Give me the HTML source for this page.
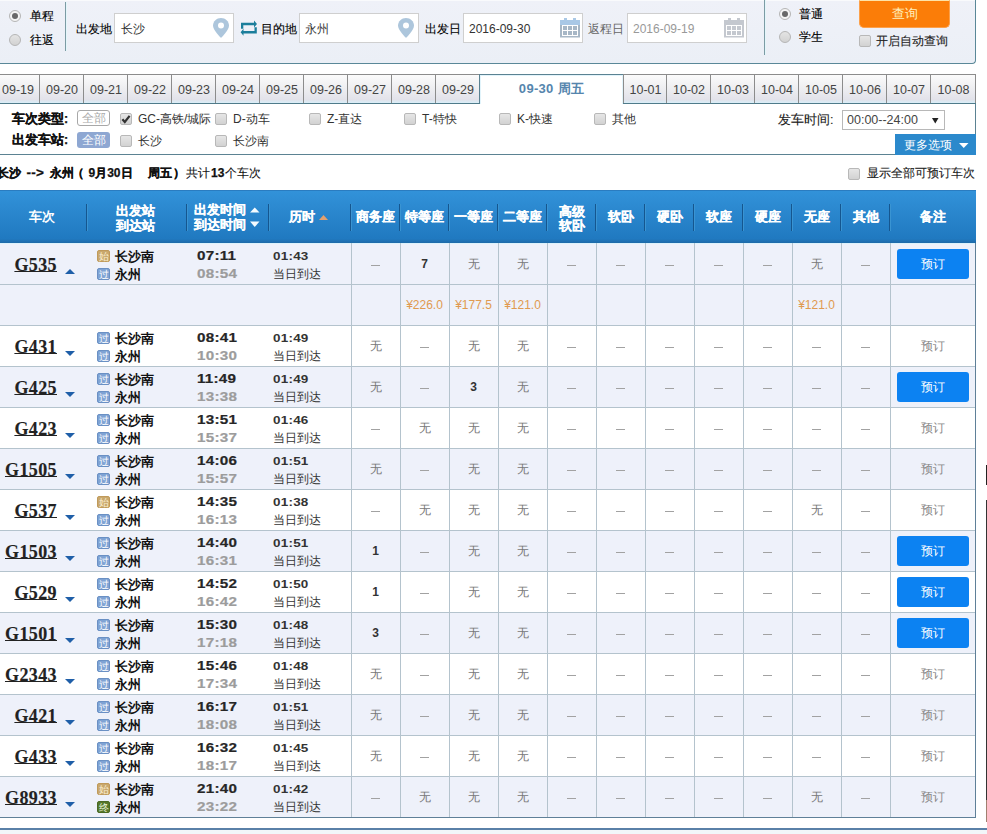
<!DOCTYPE html><html><head><meta charset="utf-8"><style>
*{margin:0;padding:0;box-sizing:border-box}
html,body{width:987px;height:834px;overflow:hidden;background:#fff;font-family:"Liberation Sans",sans-serif;font-size:12px;color:#333}
.a{position:absolute}
.t{position:absolute;white-space:nowrap;line-height:1}
.k{-webkit-text-stroke:0.12px currentColor}
.radio{position:absolute;width:12px;height:12px;border-radius:50%;border:1px solid #b5b5b5;background:linear-gradient(#e4e4e4,#d2d2d2)}
.radio.on{background:#f4f4f4}
.radio.on::after{content:"";position:absolute;left:2px;top:2px;width:6px;height:6px;border-radius:50%;background:#686868}
.inp{position:absolute;top:13px;height:30px;background:#fff;border:1px solid #cfcfcf}
.chk{position:absolute;width:12px;height:12px;border:1px solid #b8b8b8;border-radius:2px;background:linear-gradient(#e6e6e6,#d2d2d2)}
.tab{position:absolute;top:74px;height:29px;width:45px;border:1px solid #8c8c8c;border-right:none;border-bottom:none;background:linear-gradient(#fbfbfb 0%,#f0f0f2 40%,#e2e2ea 88%,#d9eef8 100%);text-align:center;line-height:31px;font-size:12.5px;color:#444}
.hd{position:absolute;color:#fff;font-weight:bold;font-size:12.5px;line-height:1;white-space:nowrap;text-align:center;-webkit-text-stroke:0.25px #fff}
.sep{position:absolute;top:204px;width:1px;height:27px;background:#15568f;box-shadow:1px 0 0 #3a94d2}
.row{position:absolute;left:0;width:976px;height:42px;border-top:1px solid #b4c3cd}
.vl{position:absolute;width:1px;background:#b4c3cd}
.num{position:absolute;left:0;width:57px;text-align:right;font-family:"Liberation Serif",serif;font-weight:bold;font-size:18px;text-decoration:underline;text-underline-offset:0px;color:#222;line-height:1;-webkit-text-stroke:0.15px #222;letter-spacing:0.4px}
.ic{position:absolute;left:97px;width:13px;height:12px;border-radius:2px;font-size:10px;line-height:12px;text-align:center;color:#fff}
.ic.g{background:#7fa3d4;border:1px solid #6a90c4}
.ic.s{background:#c9a86e;border:1px solid #c09a5a;color:#fbf0d4}
.ic.e{background:#55762c;border:1px solid #4a6a22;color:#eaf4d8}
.stn{position:absolute;left:115px;font-weight:bold;font-size:13px;color:#111;line-height:1;white-space:nowrap}
.tm{position:absolute;left:197px;font-weight:bold;font-size:13px;letter-spacing:0.2px;line-height:1;transform:scaleX(1.17);transform-origin:0 0;-webkit-text-stroke:0.2px currentColor}
.du{position:absolute;left:273px;font-weight:bold;font-size:11.5px;letter-spacing:0.2px;line-height:1;color:#333;transform:scaleX(1.17);transform-origin:0 0}
.dd{position:absolute;left:273px;font-size:12px;line-height:1;color:#333}
.cell{position:absolute;text-align:center;line-height:1;font-size:12px;color:#777}
.cell.b{font-weight:bold;color:#333}
.btn{position:absolute;left:897px;width:72px;height:30px;border-radius:3px;background:#0c82f2;color:#fff;text-align:center;line-height:30px;font-size:12px}
.btng{position:absolute;left:897px;width:72px;text-align:center;line-height:1;font-size:12px;color:#888}
.dash{position:absolute;width:9px;height:1px;background:#a2a2a2}
.pr{position:absolute;text-align:center;line-height:1;font-size:12px;color:#e09a50}
</style></head><body>
<div class="a" style="left:-2px;top:0;width:978px;height:64px;background:linear-gradient(#eff1f8,#ebeff6);border:1px solid #5a8898;border-top:none;border-left:none;border-bottom-right-radius:4px"></div>
<div class="radio on" style="left:9px;top:10px"></div><div class="t k" style="left:30px;top:10px;font-size:12px;color:#000">单程</div>
<div class="radio" style="left:9px;top:34px"></div><div class="t k" style="left:30px;top:34px;font-size:12px;color:#000">往返</div>
<div class="a" style="left:0;top:0;width:975px;height:1px;background:#f9fafc"></div><div class="a" style="left:65px;top:2px;width:1px;height:49px;background:#7c9ba4;box-shadow:1px 0 0 #e4f6fa"></div>
<div class="t k" style="left:76px;top:23px;font-size:12px;color:#000">出发地</div>
<div class="inp" style="left:114px;width:120px"></div><div class="t" style="left:121px;top:23px;font-size:12px;color:#333">长沙</div>
<svg class="a" style="left:213px;top:18px" width="16" height="20" viewBox="0 0 16 20"><path d="M8 0C3.6 0 0 3.4 0 7.6 0 12.6 8 20 8 20s8-7.4 8-12.4C16 3.4 12.4 0 8 0z" fill="#adc6dc"/><circle cx="8" cy="7.4" r="3" fill="#fff"/></svg>
<svg class="a" style="left:236px;top:16px" width="26" height="24" viewBox="0 0 26 24"><path d="M5 6.8H18V4.6L21 8 18 11.4V9.2H7.3V12.7H5Z" fill="#1b7e9b"/><path d="M20.8 17.5H7.5V19.8L4.6 16.3 7.5 12.8V15.1H18.5V11.2H20.8Z" fill="#1b7e9b"/></svg>
<div class="t k" style="left:261px;top:23px;font-size:12px;color:#000">目的地</div>
<div class="inp" style="left:299px;width:120px"></div><div class="t" style="left:305px;top:23px;font-size:12px;color:#333">永州</div>
<svg class="a" style="left:398px;top:18px" width="16" height="20" viewBox="0 0 16 20"><path d="M8 0C3.6 0 0 3.4 0 7.6 0 12.6 8 20 8 20s8-7.4 8-12.4C16 3.4 12.4 0 8 0z" fill="#adc6dc"/><circle cx="8" cy="7.4" r="3" fill="#fff"/></svg>
<div class="t k" style="left:425px;top:23px;font-size:12px;color:#000">出发日</div>
<div class="inp" style="left:463px;width:120px"></div><div class="t" style="left:469px;top:23px;font-size:12px;color:#333">2016-09-30</div>
<svg class="a" style="left:560px;top:18px" width="20" height="20" viewBox="0 0 20 20"><rect x="4" y="0" width="3" height="3" fill="#a9c8e6"/><rect x="13" y="0" width="3" height="3" fill="#a9c8e6"/><rect x="0" y="2" width="20" height="5" fill="#a9c8e6"/><rect x="0" y="7" width="20" height="12.5" fill="#a7b7c6"/><rect x="2" y="7" width="16" height="11" fill="#fff"/><g fill="#a7b7c6"><rect x="3" y="8" width="4" height="4"/><rect x="8" y="8" width="4" height="4"/><rect x="13" y="8" width="4" height="4"/><rect x="3" y="13" width="4" height="4"/><rect x="8" y="13" width="4" height="4"/><rect x="13" y="13" width="4" height="4"/></g></svg>
<div class="t" style="left:588px;top:23px;font-size:12px;color:#666">返程日</div>
<div class="inp" style="left:627px;width:120px"></div><div class="t" style="left:633px;top:23px;font-size:12px;color:#999">2016-09-19</div>
<svg class="a" style="left:724px;top:18px" width="20" height="20" viewBox="0 0 20 20"><rect x="4" y="0" width="3" height="3" fill="#c4c8cf"/><rect x="13" y="0" width="3" height="3" fill="#c4c8cf"/><rect x="0" y="2" width="20" height="5" fill="#c4c8cf"/><rect x="0" y="7" width="20" height="12.5" fill="#c4c8cf"/><rect x="2" y="7" width="16" height="11" fill="#fff"/><g fill="#c4c8cf"><rect x="3" y="8" width="4" height="4"/><rect x="8" y="8" width="4" height="4"/><rect x="13" y="8" width="4" height="4"/><rect x="3" y="13" width="4" height="4"/><rect x="8" y="13" width="4" height="4"/><rect x="13" y="13" width="4" height="4"/></g></svg>
<div class="a" style="left:764px;top:0;width:1px;height:55px;background:#7c9ba4;box-shadow:1px 0 0 #e4f6fa"></div>
<div class="radio on" style="left:779px;top:8px"></div><div class="t k" style="left:799px;top:8px;font-size:12px;color:#000">普通</div>
<div class="radio" style="left:779px;top:31px"></div><div class="t k" style="left:799px;top:31px;font-size:12px;color:#000">学生</div>
<div class="a" style="left:859px;top:0;width:91px;height:28px;background:#fb7d08;border:1px solid #fca04a;border-top:1px solid #fde3a8;border-radius:0 0 5px 5px;color:#ffeebb;text-align:center;line-height:26px;font-size:12.5px">查询</div>
<div class="chk" style="left:859px;top:35px"></div><div class="t k" style="left:876px;top:35px;font-size:12px;color:#222">开启自动查询</div>
<div class="a" style="left:0;top:103px;width:976px;height:52px;border-bottom:1px solid #5b8292;border-right:1px solid #5b8292"></div>
<div class="a" style="left:0;top:103px;width:976px;height:1px;background:#4f7b8a"></div>
<div class="tab" style="left:-5px">09-19</div>
<div class="tab" style="left:39px">09-20</div>
<div class="tab" style="left:83px">09-21</div>
<div class="tab" style="left:127px">09-22</div>
<div class="tab" style="left:171px">09-23</div>
<div class="tab" style="left:215px">09-24</div>
<div class="tab" style="left:259px">09-25</div>
<div class="tab" style="left:303px">09-26</div>
<div class="tab" style="left:347px">09-27</div>
<div class="tab" style="left:391px">09-28</div>
<div class="tab" style="left:435px">09-29</div>
<div class="a" style="left:479px;top:74px;width:145px;height:30px;background:#fff;border:1px solid #5b8292;border-bottom:none;text-align:center;line-height:28px;font-weight:bold;font-size:13px;color:#5585ad;letter-spacing:0.3px;box-shadow:inset 1px 1px 0 #e2f4fb,inset -1px 0 0 #e2f4fb">09-30 周五</div>
<div class="tab" style="left:623px;width:44px">10-01</div>
<div class="tab" style="left:666px;width:45px">10-02</div>
<div class="tab" style="left:710px;width:45px">10-03</div>
<div class="tab" style="left:754px;width:45px">10-04</div>
<div class="tab" style="left:798px;width:45px">10-05</div>
<div class="tab" style="left:842px;width:45px">10-06</div>
<div class="tab" style="left:886px;width:45px">10-07</div>
<div class="tab" style="left:930px;width:46px">10-08</div>
<div class="a" style="left:975px;top:74px;width:1px;height:29px;background:#8c8c8c"></div><div class="a" style="left:0;top:103px;width:480px;height:1px;background:#4f7b8a"></div><div class="a" style="left:623px;top:103px;width:353px;height:1px;background:#4f7b8a"></div>
<div class="t" style="left:12px;top:113px;font-weight:bold;font-size:12.5px;color:#111;-webkit-text-stroke:0.25px #111">车次类型:</div>
<div class="a" style="left:77px;top:110px;width:33px;height:16px;border:1px solid #a8a8a8;border-radius:3px;background:#fff;color:#aaa;font-size:12px;line-height:14px;text-align:center">全部</div>
<div class="t" style="left:12px;top:134px;font-weight:bold;font-size:12.5px;color:#111;-webkit-text-stroke:0.25px #111">出发车站:</div>
<div class="a" style="left:77px;top:132px;width:33px;height:16px;border-radius:3px;background:#8ea7d2;color:#fff;font-size:12px;line-height:16px;text-align:center">全部</div>
<div class="chk" style="left:120px;top:113px"></div><div class="t" style="left:138px;top:113px;font-size:12px;color:#333">GC-高铁/城际</div>
<div class="chk" style="left:215px;top:113px"></div><div class="t" style="left:233px;top:113px;font-size:12px;color:#333">D-动车</div>
<div class="chk" style="left:309px;top:113px"></div><div class="t" style="left:327px;top:113px;font-size:12px;color:#333">Z-直达</div>
<div class="chk" style="left:404px;top:113px"></div><div class="t" style="left:422px;top:113px;font-size:12px;color:#333">T-特快</div>
<div class="chk" style="left:499px;top:113px"></div><div class="t" style="left:517px;top:113px;font-size:12px;color:#333">K-快速</div>
<div class="chk" style="left:594px;top:113px"></div><div class="t" style="left:612px;top:113px;font-size:12px;color:#333">其他</div>
<svg class="a" style="left:120px;top:113px" width="12" height="12" viewBox="0 0 12 12"><path d="M2.4 6.2l2.4 2.8L9.6 2.8" stroke="#333" stroke-width="2.2" fill="none"/></svg>
<div class="chk" style="left:120px;top:135px"></div><div class="t" style="left:138px;top:135px;font-size:12px;color:#333">长沙</div>
<div class="chk" style="left:215px;top:135px"></div><div class="t" style="left:233px;top:135px;font-size:12px;color:#333">长沙南</div>
<div class="t k" style="left:778px;top:114px;font-size:12.5px;color:#222">发车时间:</div>
<div class="a" style="left:842px;top:110px;width:103px;height:20px;border:1px solid #b8b8b8;background:#fff"></div><div class="t" style="left:847px;top:114px;font-size:12.5px;color:#444">00:00--24:00</div><svg class="a" style="left:932px;top:117.5px" width="7" height="6" viewBox="0 0 7 6"><path d="M0 0h6.5L3.25 5.5z" fill="#222"/></svg>
<div class="a" style="left:895px;top:134px;width:81px;height:21px;background:#2b89cc"></div><div class="t" style="left:904px;top:138.5px;font-size:12px;color:#fff">更多选项</div><svg class="a" style="left:958.5px;top:142.5px" width="10" height="6" viewBox="0 0 10 6"><path d="M0 0h9.5L4.75 5z" fill="#fff"/></svg>
<div class="t" style="left:-3px;top:167px;font-size:12px;font-weight:bold;color:#111;-webkit-text-stroke:0.25px #111">长沙</div>
<div class="t" style="left:26.5px;top:166px;font-size:13.5px;letter-spacing:0.3px;font-weight:bold;color:#111;-webkit-text-stroke:0.25px #111">--&gt;</div>
<div class="t" style="left:49.5px;top:167px;font-size:12px;font-weight:bold;color:#111;-webkit-text-stroke:0.25px #111">永州</div>
<div class="t" style="left:71.5px;top:167px;font-size:12px;font-weight:bold;color:#111;-webkit-text-stroke:0.25px #111">（</div>
<div class="t" style="left:88.5px;top:167px;font-size:12px;font-weight:bold;color:#111;-webkit-text-stroke:0.25px #111">9月30日</div>
<div class="t" style="left:147.5px;top:167px;font-size:12px;font-weight:bold;color:#111;-webkit-text-stroke:0.25px #111">周五</div>
<div class="t" style="left:173px;top:167px;font-size:12px;font-weight:bold;color:#111;-webkit-text-stroke:0.25px #111">）</div>
<div class="t" style="left:185.5px;top:167px;font-size:12px;font-weight:normal;color:#111;-webkit-text-stroke:0.1px #111">共计</div>
<div class="t" style="left:211px;top:167px;font-size:12px;font-weight:bold;color:#111;-webkit-text-stroke:0.25px #111">13</div>
<div class="t" style="left:225px;top:167px;font-size:12px;font-weight:normal;color:#111;-webkit-text-stroke:0.1px #111">个车次</div>
<div class="chk" style="left:848px;top:168px"></div><div class="t k" style="left:867px;top:167px;font-size:12px;color:#222">显示全部可预订车次</div>
<div class="a" style="left:0;top:190px;width:976px;height:53px;background:linear-gradient(#3292d9,#2079c0 92%,#1e6aa8);border-top:1px solid #2a7cc0"></div>
<div class="sep" style="left:86px"></div>
<div class="sep" style="left:186px"></div>
<div class="sep" style="left:268px"></div>
<div class="sep" style="left:350px"></div>
<div class="sep" style="left:399px"></div>
<div class="sep" style="left:448px"></div>
<div class="sep" style="left:497px"></div>
<div class="sep" style="left:546px"></div>
<div class="sep" style="left:595px"></div>
<div class="sep" style="left:644px"></div>
<div class="sep" style="left:693px"></div>
<div class="sep" style="left:742px"></div>
<div class="sep" style="left:791px"></div>
<div class="sep" style="left:840px"></div>
<div class="sep" style="left:889px"></div>
<div class="hd" style="left:29px;top:211px;-webkit-text-stroke:0">车次</div>
<div class="hd" style="left:116px;top:203.5px;line-height:15px">出发站<br>到达站</div>
<div class="hd" style="left:194px;top:203px;line-height:14.5px;text-align:left">出发时间<br>到达时间</div>
<svg class="a" style="left:250px;top:206px" width="10" height="24" viewBox="0 0 10 24"><path d="M0 6.5h9.5L4.75 1.5z" fill="#f4fbff"/><path d="M0 15.5h9.5L4.75 21z" fill="#f4fbff"/></svg>
<div class="hd" style="left:289px;top:211px">历时</div>
<svg class="a" style="left:319px;top:214.5px" width="10" height="6" viewBox="0 0 10 6"><path d="M0 5h9L4.5 0z" fill="#e3a06e"/></svg>
<div class="hd" style="left:351px;width:49px;top:211px">商务座</div>
<div class="hd" style="left:400px;width:49px;top:211px">特等座</div>
<div class="hd" style="left:449px;width:49px;top:211px">一等座</div>
<div class="hd" style="left:498px;width:49px;top:211px">二等座</div>
<div class="hd" style="left:547px;width:49px;top:204.5px;line-height:14.5px">高级<br>软卧</div>
<div class="hd" style="left:596px;width:49px;top:211px">软卧</div>
<div class="hd" style="left:645px;width:49px;top:211px">硬卧</div>
<div class="hd" style="left:694px;width:49px;top:211px">软座</div>
<div class="hd" style="left:743px;width:49px;top:211px">硬座</div>
<div class="hd" style="left:792px;width:49px;top:211px">无座</div>
<div class="hd" style="left:841px;width:49px;top:211px">其他</div>
<div class="hd" style="left:890px;width:85px;top:211px">备注</div>
<div class="row" style="top:243px;height:42px;background:#eef1fa;border-top-color:#dcf2fb"></div>
<div class="num" style="top:256px">G535</div>
<svg class="a" style="left:65px;top:269px" width="10" height="5" viewBox="0 0 10 5"><path d="M0 5h10L5 0z" fill="#1f5fa8"/></svg>
<div class="ic s" style="top:250px">始</div><div class="stn" style="top:250px">长沙南</div>
<div class="ic g" style="top:268px">过</div><div class="stn" style="top:268px">永州</div>
<div class="tm" style="top:249px;color:#262626">07:11</div><div class="tm" style="top:267px;color:#9c9c9c">08:54</div>
<div class="du" style="top:250.5px">01:43</div><div class="dd" style="top:268px">当日到达</div>
<div class="dash" style="left:371px;top:265px"></div>
<div class="cell b" style="left:400px;width:49px;top:258px">7</div>
<div class="cell" style="left:449px;width:49px;top:258px">无</div>
<div class="cell" style="left:498px;width:49px;top:258px">无</div>
<div class="dash" style="left:567px;top:265px"></div>
<div class="dash" style="left:616px;top:265px"></div>
<div class="dash" style="left:665px;top:265px"></div>
<div class="dash" style="left:714px;top:265px"></div>
<div class="dash" style="left:763px;top:265px"></div>
<div class="cell" style="left:792px;width:49px;top:258px">无</div>
<div class="dash" style="left:861px;top:265px"></div>
<div class="btn" style="top:249px">预订</div>
<div class="row" style="top:284px;height:42px;background:#eef1fa"></div>
<div class="pr" style="left:400px;width:49px;top:299px">¥226.0</div>
<div class="pr" style="left:449px;width:49px;top:299px">¥177.5</div>
<div class="pr" style="left:498px;width:49px;top:299px">¥121.0</div>
<div class="pr" style="left:792px;width:49px;top:299px">¥121.0</div>
<div class="row" style="top:325px;height:42px;background:#fff"></div>
<div class="num" style="top:338px">G431</div>
<svg class="a" style="left:65px;top:351px" width="10" height="5" viewBox="0 0 10 5"><path d="M0 0h10L5 5z" fill="#1f5fa8"/></svg>
<div class="ic g" style="top:332px">过</div><div class="stn" style="top:332px">长沙南</div>
<div class="ic g" style="top:350px">过</div><div class="stn" style="top:350px">永州</div>
<div class="tm" style="top:331px;color:#262626">08:41</div><div class="tm" style="top:349px;color:#9c9c9c">10:30</div>
<div class="du" style="top:332.5px">01:49</div><div class="dd" style="top:350px">当日到达</div>
<div class="cell" style="left:351px;width:49px;top:340px">无</div>
<div class="dash" style="left:420px;top:347px"></div>
<div class="cell" style="left:449px;width:49px;top:340px">无</div>
<div class="cell" style="left:498px;width:49px;top:340px">无</div>
<div class="dash" style="left:567px;top:347px"></div>
<div class="dash" style="left:616px;top:347px"></div>
<div class="dash" style="left:665px;top:347px"></div>
<div class="dash" style="left:714px;top:347px"></div>
<div class="dash" style="left:763px;top:347px"></div>
<div class="dash" style="left:812px;top:347px"></div>
<div class="dash" style="left:861px;top:347px"></div>
<div class="btng" style="top:340px">预订</div>
<div class="row" style="top:366px;height:42px;background:#eef1fa"></div>
<div class="num" style="top:379px">G425</div>
<svg class="a" style="left:65px;top:392px" width="10" height="5" viewBox="0 0 10 5"><path d="M0 0h10L5 5z" fill="#1f5fa8"/></svg>
<div class="ic g" style="top:373px">过</div><div class="stn" style="top:373px">长沙南</div>
<div class="ic g" style="top:391px">过</div><div class="stn" style="top:391px">永州</div>
<div class="tm" style="top:372px;color:#262626">11:49</div><div class="tm" style="top:390px;color:#9c9c9c">13:38</div>
<div class="du" style="top:373.5px">01:49</div><div class="dd" style="top:391px">当日到达</div>
<div class="cell" style="left:351px;width:49px;top:381px">无</div>
<div class="dash" style="left:420px;top:388px"></div>
<div class="cell b" style="left:449px;width:49px;top:381px">3</div>
<div class="cell" style="left:498px;width:49px;top:381px">无</div>
<div class="dash" style="left:567px;top:388px"></div>
<div class="dash" style="left:616px;top:388px"></div>
<div class="dash" style="left:665px;top:388px"></div>
<div class="dash" style="left:714px;top:388px"></div>
<div class="dash" style="left:763px;top:388px"></div>
<div class="dash" style="left:812px;top:388px"></div>
<div class="dash" style="left:861px;top:388px"></div>
<div class="btn" style="top:372px">预订</div>
<div class="row" style="top:407px;height:42px;background:#fff"></div>
<div class="num" style="top:420px">G423</div>
<svg class="a" style="left:65px;top:433px" width="10" height="5" viewBox="0 0 10 5"><path d="M0 0h10L5 5z" fill="#1f5fa8"/></svg>
<div class="ic g" style="top:414px">过</div><div class="stn" style="top:414px">长沙南</div>
<div class="ic g" style="top:432px">过</div><div class="stn" style="top:432px">永州</div>
<div class="tm" style="top:413px;color:#262626">13:51</div><div class="tm" style="top:431px;color:#9c9c9c">15:37</div>
<div class="du" style="top:414.5px">01:46</div><div class="dd" style="top:432px">当日到达</div>
<div class="dash" style="left:371px;top:429px"></div>
<div class="cell" style="left:400px;width:49px;top:422px">无</div>
<div class="cell" style="left:449px;width:49px;top:422px">无</div>
<div class="cell" style="left:498px;width:49px;top:422px">无</div>
<div class="dash" style="left:567px;top:429px"></div>
<div class="dash" style="left:616px;top:429px"></div>
<div class="dash" style="left:665px;top:429px"></div>
<div class="dash" style="left:714px;top:429px"></div>
<div class="dash" style="left:763px;top:429px"></div>
<div class="dash" style="left:812px;top:429px"></div>
<div class="dash" style="left:861px;top:429px"></div>
<div class="btng" style="top:422px">预订</div>
<div class="row" style="top:448px;height:42px;background:#eef1fa"></div>
<div class="num" style="top:461px">G1505</div>
<svg class="a" style="left:65px;top:474px" width="10" height="5" viewBox="0 0 10 5"><path d="M0 0h10L5 5z" fill="#1f5fa8"/></svg>
<div class="ic g" style="top:455px">过</div><div class="stn" style="top:455px">长沙南</div>
<div class="ic g" style="top:473px">过</div><div class="stn" style="top:473px">永州</div>
<div class="tm" style="top:454px;color:#262626">14:06</div><div class="tm" style="top:472px;color:#9c9c9c">15:57</div>
<div class="du" style="top:455.5px">01:51</div><div class="dd" style="top:473px">当日到达</div>
<div class="cell" style="left:351px;width:49px;top:463px">无</div>
<div class="dash" style="left:420px;top:470px"></div>
<div class="cell" style="left:449px;width:49px;top:463px">无</div>
<div class="cell" style="left:498px;width:49px;top:463px">无</div>
<div class="dash" style="left:567px;top:470px"></div>
<div class="dash" style="left:616px;top:470px"></div>
<div class="dash" style="left:665px;top:470px"></div>
<div class="dash" style="left:714px;top:470px"></div>
<div class="dash" style="left:763px;top:470px"></div>
<div class="dash" style="left:812px;top:470px"></div>
<div class="dash" style="left:861px;top:470px"></div>
<div class="btng" style="top:463px">预订</div>
<div class="row" style="top:489px;height:42px;background:#fff"></div>
<div class="num" style="top:502px">G537</div>
<svg class="a" style="left:65px;top:515px" width="10" height="5" viewBox="0 0 10 5"><path d="M0 0h10L5 5z" fill="#1f5fa8"/></svg>
<div class="ic s" style="top:496px">始</div><div class="stn" style="top:496px">长沙南</div>
<div class="ic g" style="top:514px">过</div><div class="stn" style="top:514px">永州</div>
<div class="tm" style="top:495px;color:#262626">14:35</div><div class="tm" style="top:513px;color:#9c9c9c">16:13</div>
<div class="du" style="top:496.5px">01:38</div><div class="dd" style="top:514px">当日到达</div>
<div class="dash" style="left:371px;top:511px"></div>
<div class="cell" style="left:400px;width:49px;top:504px">无</div>
<div class="cell" style="left:449px;width:49px;top:504px">无</div>
<div class="cell" style="left:498px;width:49px;top:504px">无</div>
<div class="dash" style="left:567px;top:511px"></div>
<div class="dash" style="left:616px;top:511px"></div>
<div class="dash" style="left:665px;top:511px"></div>
<div class="dash" style="left:714px;top:511px"></div>
<div class="dash" style="left:763px;top:511px"></div>
<div class="cell" style="left:792px;width:49px;top:504px">无</div>
<div class="dash" style="left:861px;top:511px"></div>
<div class="btng" style="top:504px">预订</div>
<div class="row" style="top:530px;height:42px;background:#eef1fa"></div>
<div class="num" style="top:543px">G1503</div>
<svg class="a" style="left:65px;top:556px" width="10" height="5" viewBox="0 0 10 5"><path d="M0 0h10L5 5z" fill="#1f5fa8"/></svg>
<div class="ic g" style="top:537px">过</div><div class="stn" style="top:537px">长沙南</div>
<div class="ic g" style="top:555px">过</div><div class="stn" style="top:555px">永州</div>
<div class="tm" style="top:536px;color:#262626">14:40</div><div class="tm" style="top:554px;color:#9c9c9c">16:31</div>
<div class="du" style="top:537.5px">01:51</div><div class="dd" style="top:555px">当日到达</div>
<div class="cell b" style="left:351px;width:49px;top:545px">1</div>
<div class="dash" style="left:420px;top:552px"></div>
<div class="cell" style="left:449px;width:49px;top:545px">无</div>
<div class="cell" style="left:498px;width:49px;top:545px">无</div>
<div class="dash" style="left:567px;top:552px"></div>
<div class="dash" style="left:616px;top:552px"></div>
<div class="dash" style="left:665px;top:552px"></div>
<div class="dash" style="left:714px;top:552px"></div>
<div class="dash" style="left:763px;top:552px"></div>
<div class="dash" style="left:812px;top:552px"></div>
<div class="dash" style="left:861px;top:552px"></div>
<div class="btn" style="top:536px">预订</div>
<div class="row" style="top:571px;height:42px;background:#fff"></div>
<div class="num" style="top:584px">G529</div>
<svg class="a" style="left:65px;top:597px" width="10" height="5" viewBox="0 0 10 5"><path d="M0 0h10L5 5z" fill="#1f5fa8"/></svg>
<div class="ic g" style="top:578px">过</div><div class="stn" style="top:578px">长沙南</div>
<div class="ic g" style="top:596px">过</div><div class="stn" style="top:596px">永州</div>
<div class="tm" style="top:577px;color:#262626">14:52</div><div class="tm" style="top:595px;color:#9c9c9c">16:42</div>
<div class="du" style="top:578.5px">01:50</div><div class="dd" style="top:596px">当日到达</div>
<div class="cell b" style="left:351px;width:49px;top:586px">1</div>
<div class="dash" style="left:420px;top:593px"></div>
<div class="cell" style="left:449px;width:49px;top:586px">无</div>
<div class="cell" style="left:498px;width:49px;top:586px">无</div>
<div class="dash" style="left:567px;top:593px"></div>
<div class="dash" style="left:616px;top:593px"></div>
<div class="dash" style="left:665px;top:593px"></div>
<div class="dash" style="left:714px;top:593px"></div>
<div class="dash" style="left:763px;top:593px"></div>
<div class="dash" style="left:812px;top:593px"></div>
<div class="dash" style="left:861px;top:593px"></div>
<div class="btn" style="top:577px">预订</div>
<div class="row" style="top:612px;height:42px;background:#eef1fa"></div>
<div class="num" style="top:625px">G1501</div>
<svg class="a" style="left:65px;top:638px" width="10" height="5" viewBox="0 0 10 5"><path d="M0 0h10L5 5z" fill="#1f5fa8"/></svg>
<div class="ic g" style="top:619px">过</div><div class="stn" style="top:619px">长沙南</div>
<div class="ic g" style="top:637px">过</div><div class="stn" style="top:637px">永州</div>
<div class="tm" style="top:618px;color:#262626">15:30</div><div class="tm" style="top:636px;color:#9c9c9c">17:18</div>
<div class="du" style="top:619.5px">01:48</div><div class="dd" style="top:637px">当日到达</div>
<div class="cell b" style="left:351px;width:49px;top:627px">3</div>
<div class="dash" style="left:420px;top:634px"></div>
<div class="cell" style="left:449px;width:49px;top:627px">无</div>
<div class="cell" style="left:498px;width:49px;top:627px">无</div>
<div class="dash" style="left:567px;top:634px"></div>
<div class="dash" style="left:616px;top:634px"></div>
<div class="dash" style="left:665px;top:634px"></div>
<div class="dash" style="left:714px;top:634px"></div>
<div class="dash" style="left:763px;top:634px"></div>
<div class="dash" style="left:812px;top:634px"></div>
<div class="dash" style="left:861px;top:634px"></div>
<div class="btn" style="top:618px">预订</div>
<div class="row" style="top:653px;height:42px;background:#fff"></div>
<div class="num" style="top:666px">G2343</div>
<svg class="a" style="left:65px;top:679px" width="10" height="5" viewBox="0 0 10 5"><path d="M0 0h10L5 5z" fill="#1f5fa8"/></svg>
<div class="ic g" style="top:660px">过</div><div class="stn" style="top:660px">长沙南</div>
<div class="ic g" style="top:678px">过</div><div class="stn" style="top:678px">永州</div>
<div class="tm" style="top:659px;color:#262626">15:46</div><div class="tm" style="top:677px;color:#9c9c9c">17:34</div>
<div class="du" style="top:660.5px">01:48</div><div class="dd" style="top:678px">当日到达</div>
<div class="cell" style="left:351px;width:49px;top:668px">无</div>
<div class="dash" style="left:420px;top:675px"></div>
<div class="cell" style="left:449px;width:49px;top:668px">无</div>
<div class="cell" style="left:498px;width:49px;top:668px">无</div>
<div class="dash" style="left:567px;top:675px"></div>
<div class="dash" style="left:616px;top:675px"></div>
<div class="dash" style="left:665px;top:675px"></div>
<div class="dash" style="left:714px;top:675px"></div>
<div class="dash" style="left:763px;top:675px"></div>
<div class="dash" style="left:812px;top:675px"></div>
<div class="dash" style="left:861px;top:675px"></div>
<div class="btng" style="top:668px">预订</div>
<div class="row" style="top:694px;height:42px;background:#eef1fa"></div>
<div class="num" style="top:707px">G421</div>
<svg class="a" style="left:65px;top:720px" width="10" height="5" viewBox="0 0 10 5"><path d="M0 0h10L5 5z" fill="#1f5fa8"/></svg>
<div class="ic g" style="top:701px">过</div><div class="stn" style="top:701px">长沙南</div>
<div class="ic g" style="top:719px">过</div><div class="stn" style="top:719px">永州</div>
<div class="tm" style="top:700px;color:#262626">16:17</div><div class="tm" style="top:718px;color:#9c9c9c">18:08</div>
<div class="du" style="top:701.5px">01:51</div><div class="dd" style="top:719px">当日到达</div>
<div class="cell" style="left:351px;width:49px;top:709px">无</div>
<div class="dash" style="left:420px;top:716px"></div>
<div class="cell" style="left:449px;width:49px;top:709px">无</div>
<div class="cell" style="left:498px;width:49px;top:709px">无</div>
<div class="dash" style="left:567px;top:716px"></div>
<div class="dash" style="left:616px;top:716px"></div>
<div class="dash" style="left:665px;top:716px"></div>
<div class="dash" style="left:714px;top:716px"></div>
<div class="dash" style="left:763px;top:716px"></div>
<div class="dash" style="left:812px;top:716px"></div>
<div class="dash" style="left:861px;top:716px"></div>
<div class="btng" style="top:709px">预订</div>
<div class="row" style="top:735px;height:42px;background:#fff"></div>
<div class="num" style="top:748px">G433</div>
<svg class="a" style="left:65px;top:761px" width="10" height="5" viewBox="0 0 10 5"><path d="M0 0h10L5 5z" fill="#1f5fa8"/></svg>
<div class="ic g" style="top:742px">过</div><div class="stn" style="top:742px">长沙南</div>
<div class="ic g" style="top:760px">过</div><div class="stn" style="top:760px">永州</div>
<div class="tm" style="top:741px;color:#262626">16:32</div><div class="tm" style="top:759px;color:#9c9c9c">18:17</div>
<div class="du" style="top:742.5px">01:45</div><div class="dd" style="top:760px">当日到达</div>
<div class="cell" style="left:351px;width:49px;top:750px">无</div>
<div class="dash" style="left:420px;top:757px"></div>
<div class="cell" style="left:449px;width:49px;top:750px">无</div>
<div class="cell" style="left:498px;width:49px;top:750px">无</div>
<div class="dash" style="left:567px;top:757px"></div>
<div class="dash" style="left:616px;top:757px"></div>
<div class="dash" style="left:665px;top:757px"></div>
<div class="dash" style="left:714px;top:757px"></div>
<div class="dash" style="left:763px;top:757px"></div>
<div class="dash" style="left:812px;top:757px"></div>
<div class="dash" style="left:861px;top:757px"></div>
<div class="btng" style="top:750px">预订</div>
<div class="row" style="top:776px;height:42px;background:#eef1fa"></div>
<div class="num" style="top:789px">G8933</div>
<svg class="a" style="left:65px;top:802px" width="10" height="5" viewBox="0 0 10 5"><path d="M0 0h10L5 5z" fill="#1f5fa8"/></svg>
<div class="ic s" style="top:783px">始</div><div class="stn" style="top:783px">长沙南</div>
<div class="ic e" style="top:801px">终</div><div class="stn" style="top:801px">永州</div>
<div class="tm" style="top:782px;color:#262626">21:40</div><div class="tm" style="top:800px;color:#9c9c9c">23:22</div>
<div class="du" style="top:783.5px">01:42</div><div class="dd" style="top:801px">当日到达</div>
<div class="dash" style="left:371px;top:798px"></div>
<div class="cell" style="left:400px;width:49px;top:791px">无</div>
<div class="cell" style="left:449px;width:49px;top:791px">无</div>
<div class="cell" style="left:498px;width:49px;top:791px">无</div>
<div class="dash" style="left:567px;top:798px"></div>
<div class="dash" style="left:616px;top:798px"></div>
<div class="dash" style="left:665px;top:798px"></div>
<div class="dash" style="left:714px;top:798px"></div>
<div class="dash" style="left:763px;top:798px"></div>
<div class="cell" style="left:792px;width:49px;top:791px">无</div>
<div class="dash" style="left:861px;top:798px"></div>
<div class="btng" style="top:791px">预订</div>
<div class="vl" style="left:351px;top:243px;height:575px"></div>
<div class="vl" style="left:400px;top:243px;height:575px"></div>
<div class="vl" style="left:449px;top:243px;height:575px"></div>
<div class="vl" style="left:498px;top:243px;height:575px"></div>
<div class="vl" style="left:547px;top:243px;height:575px"></div>
<div class="vl" style="left:596px;top:243px;height:575px"></div>
<div class="vl" style="left:645px;top:243px;height:575px"></div>
<div class="vl" style="left:694px;top:243px;height:575px"></div>
<div class="vl" style="left:743px;top:243px;height:575px"></div>
<div class="vl" style="left:792px;top:243px;height:575px"></div>
<div class="vl" style="left:841px;top:243px;height:575px"></div>
<div class="vl" style="left:890px;top:243px;height:575px"></div>
<div class="a" style="left:975px;top:243px;width:1px;height:575px;background:#5f8098"></div><div class="a" style="left:0;top:817px;width:976px;height:1px;background:#5f8098"></div>
<div class="a" style="left:0;top:828px;width:987px;height:2px;background:#5a80a8"></div><div class="a" style="left:0;top:830px;width:987px;height:4px;background:#f2f6f9"></div>
<div class="a" style="left:986px;top:465px;width:1px;height:20px;background:#222"></div><div class="a" style="left:986px;top:500px;width:1px;height:300px;background:#333"></div><div class="a" style="left:986px;top:800px;width:1px;height:22px;background:#a08070"></div>
</body></html>
